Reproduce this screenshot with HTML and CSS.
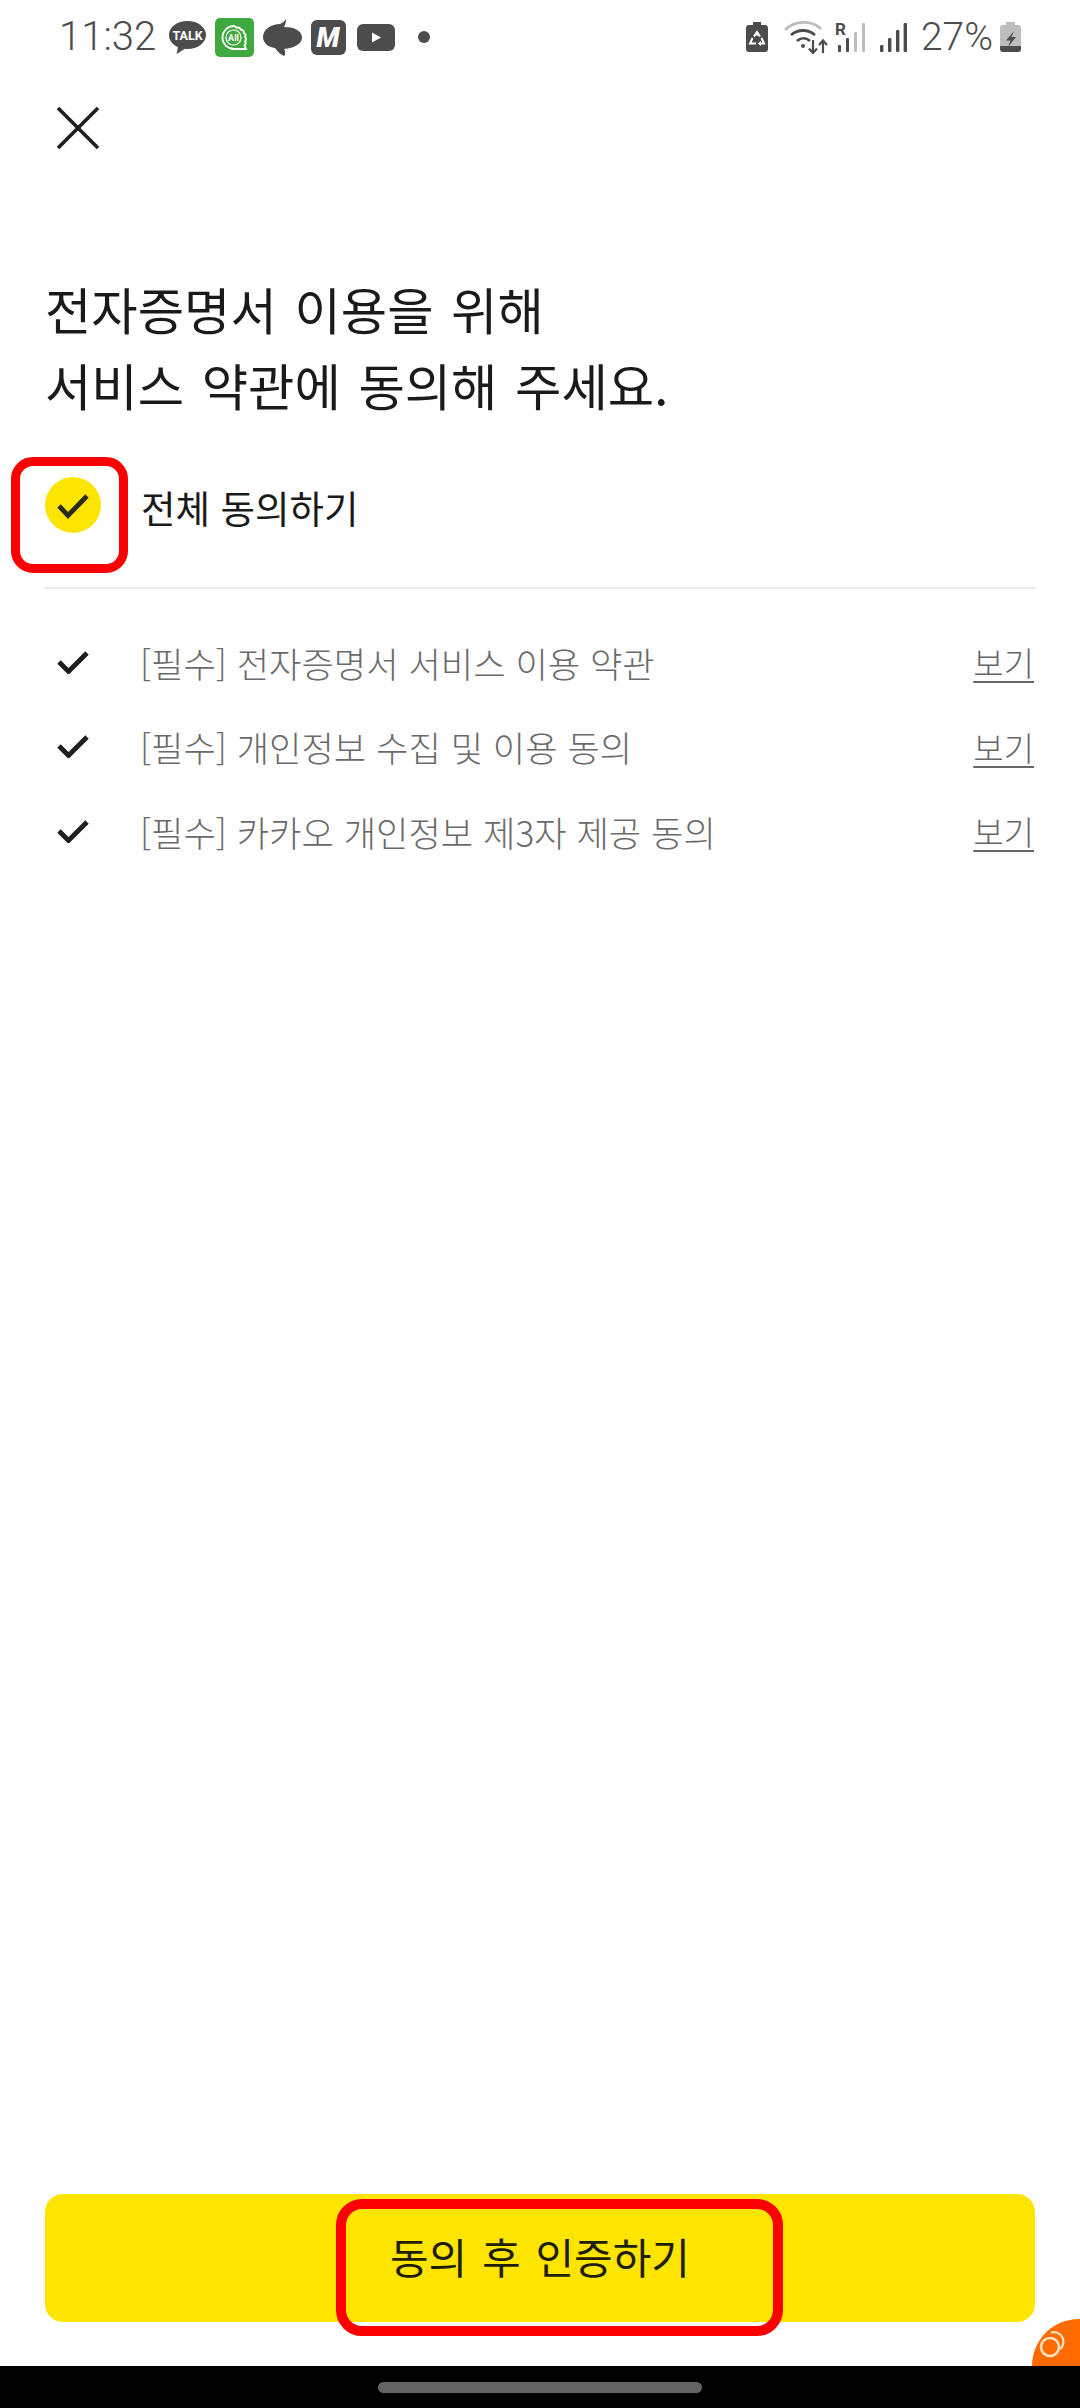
FILE: index.html
```html
<!DOCTYPE html>
<html lang="ko">
<head>
<meta charset="utf-8">
<link rel="stylesheet" href="styles.css">
</head>
<body>
<div class="page">
  <header class="status">
    <span class="time">11:32</span>
    <div class="notif">
      <svg class="i-talk" viewBox="0 0 37 33"><path d="M18.500 0C8.300 0 0 6 0 14c0 5.300 3.600 9.800 9 12.300L7.500 33l8.500-5.200c.8.100 1.700.200 2.500.200C28.700 28 37 21.800 37 14S28.700 0 18.500 0z" fill="#4c4c4c"/><text x="18.500" y="19" class="talk-t" text-anchor="middle">TALK</text></svg>
      <svg class="i-all" viewBox="0 0 39 39"><rect width="39" height="39" rx="5" fill="#3fa93f"/><path d="M19 8a11.500 11.500 0 1 0 0 23h12l-1.500-3.500c1.500-1 1.500-3 .5-4 1.500-1 1.500-3.500 0-4.500 1-1.500.5-3.500-1-4 .2-2-1.500-3.500-3-3.200-.8-1.800-2.800-2.600-4.500-2-.8-.8-1.600-1.800-2.500-1.800z" fill="none" stroke="#fff" stroke-width="1.800"/><circle cx="18.500" cy="19.500" r="7.500" fill="none" stroke="#fff" stroke-width="1.200"/><text x="18.500" y="23" class="all-t" text-anchor="middle">All</text></svg>
      <svg class="i-bird" viewBox="0 0 39 37"><path d="M23 0c0 3-.5 5-2 8 9 0 18 3 18 10.500C39 25 31 29 21 30c1.500 2 1.500 4 .5 7-3-1-7-4-9.500-8C5 28 0 24 0 18 0 10 9 5 17 5c2.500-1 4.500-3 6-5z" fill="#4c4c4c"/></svg>
      <svg class="i-m" viewBox="0 0 35 35"><rect width="35" height="35" rx="6" fill="#4c4c4c"/><text x="17" y="27" class="m-t" text-anchor="middle">M</text></svg>
      <svg class="i-yt" viewBox="0 0 38 27"><rect width="38" height="27" rx="6" fill="#4c4c4c"/><path d="M15 8.500v10l9-5z" fill="#fff"/></svg>
      <span class="dot"></span>
    </div>
    <div class="sys">
      <svg class="i-rec" viewBox="0 0 22 30"><path d="M7 0h8v3h4a3 3 0 0 1 3 3v21a3 3 0 0 1-3 3H3a3 3 0 0 1-3-3V6a3 3 0 0 1 3-3h4z" fill="#4c4c4c"/><path d="M8 14.500L11 10l3 4.500M15.500 16l2.500 5.500h-4.500M6.500 16L4 21.500h6" fill="none" stroke="#fff" stroke-width="2"/><path d="M12 21.500l3-2.500v5zM13 14l-4-1 3-3z" fill="#fff"/></svg>
      <svg class="i-wifi" viewBox="0 0 44 33"><path d="M1 9C11-1 28-1 37 8" fill="none" stroke="#bdbdbd" stroke-width="2.600"/><path d="M7 14c7-6 17-6 24 0M13 20c4-3.500 9-3.500 13 0" fill="none" stroke="#4c4c4c" stroke-width="2.800"/><circle cx="19" cy="25" r="2" fill="#4c4c4c"/><path d="M29 19v13M25 27.500l4 4.500 4-4.500M39 32V20M35 24l4-4.500 4 4.500" fill="none" stroke="#4c4c4c" stroke-width="2.200"/></svg>
      <svg class="i-sig1" viewBox="0 -5 30 39"><text x="0" y="12" class="r-t">R</text><rect x="3" y="22" width="3" height="7" rx="1" fill="#4c4c4c"/><rect x="11" y="15" width="3" height="14" rx="1" fill="#4c4c4c"/><rect x="19" y="9" width="3" height="20" rx="1" fill="#bdbdbd"/><rect x="27" y="0" width="3" height="29" rx="1" fill="#bdbdbd"/></svg>
      <svg class="i-sig2" viewBox="0 0 27 29"><rect x="0" y="22" width="3.400" height="7" rx="1" fill="#4c4c4c"/><rect x="8" y="15" width="3.400" height="14" rx="1" fill="#4c4c4c"/><rect x="16" y="7" width="3.400" height="22" rx="1" fill="#4c4c4c"/><rect x="23.600" y="0" width="3.400" height="29" rx="1" fill="#4c4c4c"/></svg>
      <span class="pct">27%</span>
      <svg class="i-bat" viewBox="0 0 21 30"><path d="M6 0h9v3h3a3 3 0 0 1 3 3v18H0V6a3 3 0 0 1 3-3h3z" fill="#bdbdbd"/><path d="M0 24h21v3a3 3 0 0 1-3 3H3a3 3 0 0 1-3-3z" fill="#4c4c4c"/><path d="M14 9l-8 9.500h4.500L8 25l8-10h-4.500z" fill="#4c4c4c"/></svg>
    </div>
  </header>

  <main class="content">
    <div class="close-row">
      <svg class="i-close" viewBox="0 0 44 44"><path d="M2 2l40 40M42 2L2 42" fill="none" stroke="#1e1e1e" stroke-width="3.600"/></svg>
    </div>
    <h1 class="title">전자증명서 이용을 위해<br>서비스 약관에 동의해 주세요.</h1>
    <div class="all-row">
      <div class="all-check">
        <svg class="i-circle" viewBox="0 0 56 56"><circle cx="28" cy="28" r="28" fill="#fee500"/><path d="M14 29l9 9.500L42 19" fill="none" stroke="#2b2a14" stroke-width="4.800"/></svg>
        <span class="mark mark-check"></span>
      </div>
      <span class="all-label">전체 동의하기</span>
    </div>
    <div class="divider"></div>
    <ul class="terms">
      <li class="term">
        <svg class="i-check" viewBox="0 0 32 23"><path d="M2 11l9.500 9.500L30 2" fill="none" stroke="#1e1e1e" stroke-width="4.800"/></svg>
        <span class="term-text">[필수] 전자증명서 서비스 이용 약관</span>
        <a class="term-link">보기</a>
      </li>
      <li class="term">
        <svg class="i-check" viewBox="0 0 32 23"><path d="M2 11l9.500 9.500L30 2" fill="none" stroke="#1e1e1e" stroke-width="4.800"/></svg>
        <span class="term-text">[필수] 개인정보 수집 및 이용 동의</span>
        <a class="term-link">보기</a>
      </li>
      <li class="term">
        <svg class="i-check" viewBox="0 0 32 23"><path d="M2 11l9.500 9.500L30 2" fill="none" stroke="#1e1e1e" stroke-width="4.800"/></svg>
        <span class="term-text">[필수] 카카오 개인정보 제3자 제공 동의</span>
        <a class="term-link">보기</a>
      </li>
    </ul>
  </main>

  <footer class="footer">
    <button class="cta">동의 후 인증하기<span class="mark mark-cta"></span></button>
    <div class="fab">
      <svg class="i-fab" viewBox="0 0 30 30"><circle cx="12" cy="18" r="9" fill="none" stroke="#ffe3c4" stroke-width="2.600"/><path d="M13 3.500c7-2 14 4 12 12-.5 2-1.500 3.500-3 4.500" fill="none" stroke="#ffe3c4" stroke-width="2.200"/></svg>
    </div>
  </footer>

  <nav class="navbar"><span class="pill"></span></nav>
</div>
</body>
</html>
```
FILE: styles.css
```css
* { box-sizing: border-box; }
html, body { margin: 0; padding: 0; background: #fff; }
body { font-family: "Noto Sans CJK KR", "Noto Sans", sans-serif; color: #1e1e1e; }
.page { width: 1080px; height: 2408px; display: flex; flex-direction: column; overflow: hidden; }

/* status bar */
.status { height: 74px; display: flex; align-items: center; padding: 0 59px 0 59px; color: #4c4c4c; font-family: Roboto, sans-serif; font-weight: 300; }
.time { font-size: 40px; line-height: 74px; width: 110px; }
.notif { display: flex; align-items: center; }
.sys { margin-left: auto; display: flex; align-items: center; }
.status svg { display: block; flex: none; }
.i-talk { width: 37px; height: 33px; }
.i-all { width: 39px; height: 39px; margin-left: 9px; }
.i-bird { width: 39px; height: 37px; margin-left: 9px; }
.i-m { width: 35px; height: 35px; margin-left: 9px; }
.i-yt { width: 38px; height: 27px; margin-left: 11px; }
.dot { width: 12px; height: 12px; border-radius: 50%; background: #4c4c4c; margin-left: 23px; }
.talk-t { font: 700 12.500px Roboto, sans-serif; fill: #fff; }
.all-t { font: 700 9px Roboto, sans-serif; fill: #fff; }
.m-t { font: italic 900 27px Roboto, sans-serif; fill: #fff; }
.r-t { font: 700 17px Roboto, sans-serif; fill: #4c4c4c; }
.i-rec { width: 22px; height: 30px; }
.i-wifi { width: 44px; height: 33px; margin-left: 16px; }
.i-sig1 { width: 30px; height: 39px; margin-left: 7px; }
.i-sig2 { width: 27px; height: 29px; margin-left: 15px; }
.pct { font-size: 39px; line-height: 74px; margin-left: 14px; }
.i-bat { width: 21px; height: 30px; margin-left: 7px; }

/* content */
.content { flex: 1; padding: 0 45px; }
.close-row { padding: 32px 0 0 11px; }
.i-close { display: block; width: 44px; height: 44px; }
.title { margin: 121px 0 0; font-size: 50.400px; font-weight: 400; line-height: 76px; word-spacing: 3.500px; color: #1a1a1a; }
.all-row { margin-top: 46px; height: 72px; display: flex; align-items: center; gap: 40px; }
.all-check { position: relative; width: 56px; height: 56px; flex: none; }
.i-circle { display: block; width: 56px; height: 56px; }
.all-label { font-size: 37.500px; line-height: 72px; padding-top: 4px; color: #1a1a1a; }
.divider { margin-top: 46px; height: 2px; background: #e9e9e9; }
.terms { list-style: none; margin: 31px 0 0; padding: 0; }
.term { height: 84.500px; display: flex; align-items: center; }
.i-check { display: block; flex: none; width: 32px; height: 23px; margin-left: 12px; }
.term-text { margin-left: 51px; font-size: 35.200px; color: #6a6a6a; font-weight: 300; }
.term-link { margin-left: auto; margin-right: 1px; font-size: 33px; color: #666; text-decoration: underline; text-underline-offset: 5px; text-decoration-thickness: 2px; font-weight: 300; }

/* annotation frames */
.mark { position: absolute; border: 9px solid #fa0000; border-radius: 22px; pointer-events: none; }
.mark-check { left: -34px; top: -20px; width: 117px; height: 116px; }
.mark-cta { left: 291px; top: 5px; width: 447px; height: 137px; border-width: 10px; border-radius: 26px; }

/* footer */
.footer { position: relative; height: 172px; padding: 0 45px; flex: none; }
.cta { position: relative; display: block; width: 990px; height: 128px; border: 0; border-radius: 18px; background: #fee500; color: #1e1e00; font-family: inherit; font-size: 42px; font-weight: 400; padding: 0 0 5px; word-spacing: 3px; }
.fab { position: absolute; right: -46px; bottom: -47px; width: 94px; height: 94px; border-radius: 50%; background: #ff6b00; }
.i-fab { position: absolute; left: 6px; top: 10px; width: 30px; height: 30px; }
.navbar { position: relative; flex: none; height: 42px; background: #000; display: flex; justify-content: center; padding-top: 16px; }
.pill { display: block; width: 324px; height: 11px; border-radius: 6px; background: #636363; }
```
